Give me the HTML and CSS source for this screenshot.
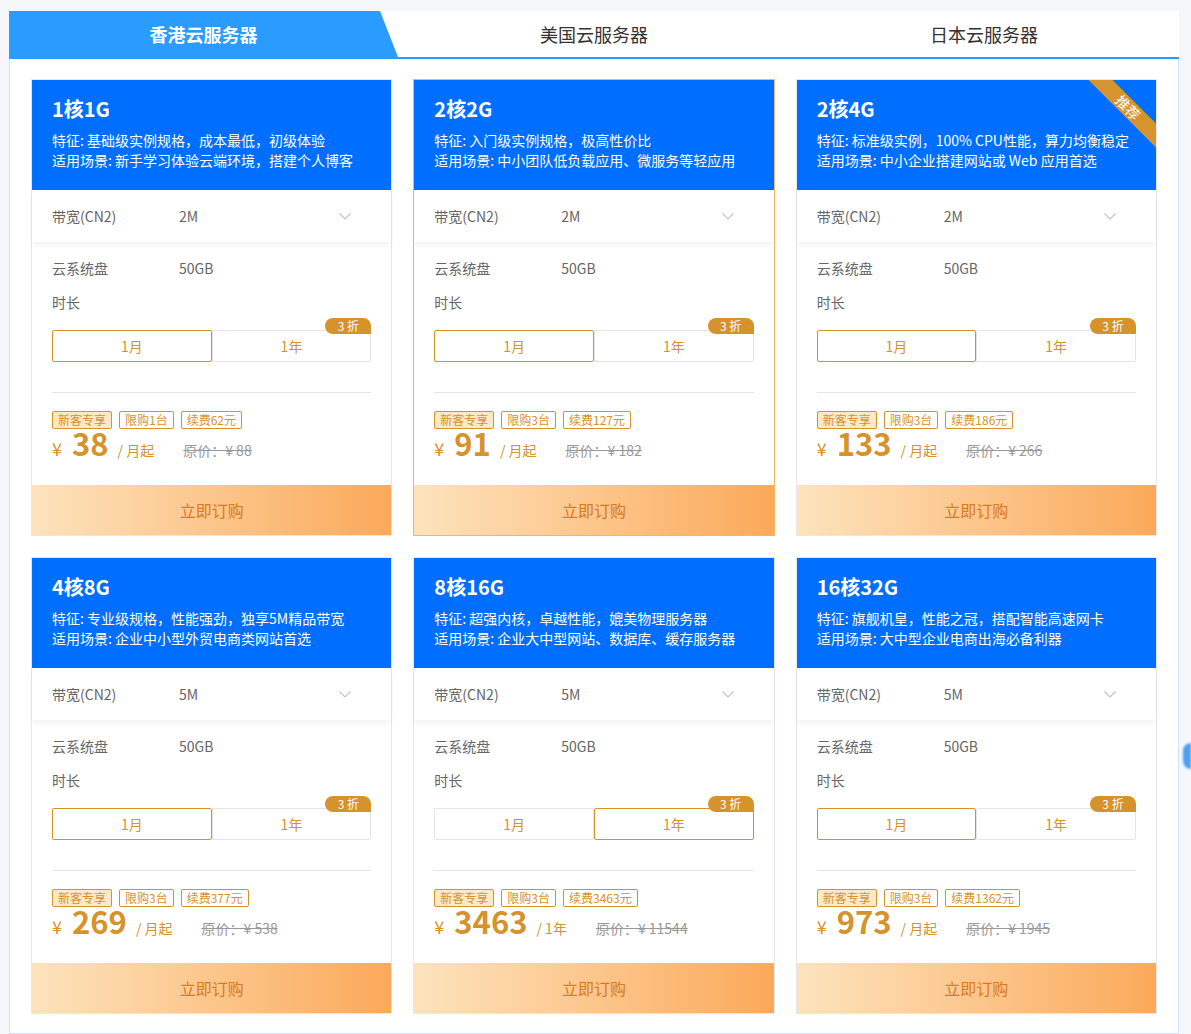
FILE: index.html
```html
<!DOCTYPE html>
<html lang="zh-CN">
<head>
    <meta charset="UTF-8">
    <meta name="viewport" content="width=device-width, initial-scale=1.0">
    <title>云服务器套餐</title>
    <link rel="stylesheet" href="styles.css">
</head>
<body>

<div class="panel">
    <!-- 地区切换 -->
    <div class="tabs">
        <div class="tab active">香港云服务器</div>
        <div class="tab">美国云服务器</div>
        <div class="tab">日本云服务器</div>
    </div>

    <div class="plans">
        <!-- 1核1G -->
        <div class="plan-card">
            <div class="plan-head">
                <h3 class="plan-name">1核1G</h3>
                <p class="plan-desc">特征: 基础级实例规格，成本最低，初级体验</p>
                <p class="plan-desc">适用场景: 新手学习体验云端环境，搭建个人博客</p>
            </div>
            <div class="plan-select">
                <span class="field-label">带宽(CN2)</span>
                <span class="field-value">2M</span>
                <svg class="chevron" width="12" height="7" viewBox="0 0 12 7"><polyline points="0.5,0.5 6,6 11.5,0.5"/></svg>
            </div>
            <div class="plan-body">
                <div class="field-row"><span class="field-label">云系统盘</span><span class="field-value">50GB</span></div>
                <div class="field-row"><span class="field-label">时长</span></div>
                <div class="duration">
                    <span class="dur-btn active">1月</span>
                    <span class="dur-btn">1年</span>
                    <span class="discount">3 折</span>
                </div>
                <div class="divider"></div>
                <div class="tags">
                    <span class="tag tag-new">新客专享</span>
                    <span class="tag">限购1台</span>
                    <span class="tag">续费62元</span>
                </div>
                <div class="price-row">
                    <span class="currency">¥</span>
                    <span class="amount">38</span>
                    <span class="unit">/ 月起</span>
                    <span class="orig">原价：¥ 88</span>
                </div>
            </div>
            <a class="buy-btn" href="#">立即订购</a>
        </div>

        <!-- 2核2G -->
        <div class="plan-card hover">
            <div class="plan-head">
                <h3 class="plan-name">2核2G</h3>
                <p class="plan-desc">特征: 入门级实例规格，极高性价比</p>
                <p class="plan-desc">适用场景: 中小团队低负载应用、微服务等轻应用</p>
            </div>
            <div class="plan-select">
                <span class="field-label">带宽(CN2)</span>
                <span class="field-value">2M</span>
                <svg class="chevron" width="12" height="7" viewBox="0 0 12 7"><polyline points="0.5,0.5 6,6 11.5,0.5"/></svg>
            </div>
            <div class="plan-body">
                <div class="field-row"><span class="field-label">云系统盘</span><span class="field-value">50GB</span></div>
                <div class="field-row"><span class="field-label">时长</span></div>
                <div class="duration">
                    <span class="dur-btn active">1月</span>
                    <span class="dur-btn">1年</span>
                    <span class="discount">3 折</span>
                </div>
                <div class="divider"></div>
                <div class="tags">
                    <span class="tag tag-new">新客专享</span>
                    <span class="tag">限购3台</span>
                    <span class="tag">续费127元</span>
                </div>
                <div class="price-row">
                    <span class="currency">¥</span>
                    <span class="amount">91</span>
                    <span class="unit">/ 月起</span>
                    <span class="orig">原价：¥ 182</span>
                </div>
            </div>
            <a class="buy-btn" href="#">立即订购</a>
        </div>

        <!-- 2核4G 推荐 -->
        <div class="plan-card">
            <div class="plan-head">
                <span class="ribbon">推荐</span>
                <h3 class="plan-name">2核4G</h3>
                <p class="plan-desc">特征: 标准级实例，100% CPU性能，算力均衡稳定</p>
                <p class="plan-desc">适用场景: 中小企业搭建网站或 Web 应用首选</p>
            </div>
            <div class="plan-select">
                <span class="field-label">带宽(CN2)</span>
                <span class="field-value">2M</span>
                <svg class="chevron" width="12" height="7" viewBox="0 0 12 7"><polyline points="0.5,0.5 6,6 11.5,0.5"/></svg>
            </div>
            <div class="plan-body">
                <div class="field-row"><span class="field-label">云系统盘</span><span class="field-value">50GB</span></div>
                <div class="field-row"><span class="field-label">时长</span></div>
                <div class="duration">
                    <span class="dur-btn active">1月</span>
                    <span class="dur-btn">1年</span>
                    <span class="discount">3 折</span>
                </div>
                <div class="divider"></div>
                <div class="tags">
                    <span class="tag tag-new">新客专享</span>
                    <span class="tag">限购3台</span>
                    <span class="tag">续费186元</span>
                </div>
                <div class="price-row">
                    <span class="currency">¥</span>
                    <span class="amount">133</span>
                    <span class="unit">/ 月起</span>
                    <span class="orig">原价：¥ 266</span>
                </div>
            </div>
            <a class="buy-btn" href="#">立即订购</a>
        </div>

        <!-- 4核8G -->
        <div class="plan-card">
            <div class="plan-head">
                <h3 class="plan-name">4核8G</h3>
                <p class="plan-desc">特征: 专业级规格，性能强劲，独享5M精品带宽</p>
                <p class="plan-desc">适用场景: 企业中小型外贸电商类网站首选</p>
            </div>
            <div class="plan-select">
                <span class="field-label">带宽(CN2)</span>
                <span class="field-value">5M</span>
                <svg class="chevron" width="12" height="7" viewBox="0 0 12 7"><polyline points="0.5,0.5 6,6 11.5,0.5"/></svg>
            </div>
            <div class="plan-body">
                <div class="field-row"><span class="field-label">云系统盘</span><span class="field-value">50GB</span></div>
                <div class="field-row"><span class="field-label">时长</span></div>
                <div class="duration">
                    <span class="dur-btn active">1月</span>
                    <span class="dur-btn">1年</span>
                    <span class="discount">3 折</span>
                </div>
                <div class="divider"></div>
                <div class="tags">
                    <span class="tag tag-new">新客专享</span>
                    <span class="tag">限购3台</span>
                    <span class="tag">续费377元</span>
                </div>
                <div class="price-row">
                    <span class="currency">¥</span>
                    <span class="amount">269</span>
                    <span class="unit">/ 月起</span>
                    <span class="orig">原价：¥ 538</span>
                </div>
            </div>
            <a class="buy-btn" href="#">立即订购</a>
        </div>

        <!-- 8核16G -->
        <div class="plan-card">
            <div class="plan-head">
                <h3 class="plan-name">8核16G</h3>
                <p class="plan-desc">特征: 超强内核，卓越性能，媲美物理服务器</p>
                <p class="plan-desc">适用场景: 企业大中型网站、数据库、缓存服务器</p>
            </div>
            <div class="plan-select">
                <span class="field-label">带宽(CN2)</span>
                <span class="field-value">5M</span>
                <svg class="chevron" width="12" height="7" viewBox="0 0 12 7"><polyline points="0.5,0.5 6,6 11.5,0.5"/></svg>
            </div>
            <div class="plan-body">
                <div class="field-row"><span class="field-label">云系统盘</span><span class="field-value">50GB</span></div>
                <div class="field-row"><span class="field-label">时长</span></div>
                <div class="duration">
                    <span class="dur-btn">1月</span>
                    <span class="dur-btn active">1年</span>
                    <span class="discount">3 折</span>
                </div>
                <div class="divider"></div>
                <div class="tags">
                    <span class="tag tag-new">新客专享</span>
                    <span class="tag">限购3台</span>
                    <span class="tag">续费3463元</span>
                </div>
                <div class="price-row">
                    <span class="currency">¥</span>
                    <span class="amount">3463</span>
                    <span class="unit">/ 1年</span>
                    <span class="orig">原价：¥ 11544</span>
                </div>
            </div>
            <a class="buy-btn" href="#">立即订购</a>
        </div>

        <!-- 16核32G -->
        <div class="plan-card">
            <div class="plan-head">
                <h3 class="plan-name">16核32G</h3>
                <p class="plan-desc">特征: 旗舰机皇，性能之冠，搭配智能高速网卡</p>
                <p class="plan-desc">适用场景: 大中型企业电商出海必备利器</p>
            </div>
            <div class="plan-select">
                <span class="field-label">带宽(CN2)</span>
                <span class="field-value">5M</span>
                <svg class="chevron" width="12" height="7" viewBox="0 0 12 7"><polyline points="0.5,0.5 6,6 11.5,0.5"/></svg>
            </div>
            <div class="plan-body">
                <div class="field-row"><span class="field-label">云系统盘</span><span class="field-value">50GB</span></div>
                <div class="field-row"><span class="field-label">时长</span></div>
                <div class="duration">
                    <span class="dur-btn active">1月</span>
                    <span class="dur-btn">1年</span>
                    <span class="discount">3 折</span>
                </div>
                <div class="divider"></div>
                <div class="tags">
                    <span class="tag tag-new">新客专享</span>
                    <span class="tag">限购3台</span>
                    <span class="tag">续费1362元</span>
                </div>
                <div class="price-row">
                    <span class="currency">¥</span>
                    <span class="amount">973</span>
                    <span class="unit">/ 月起</span>
                    <span class="orig">原价：¥ 1945</span>
                </div>
            </div>
            <a class="buy-btn" href="#">立即订购</a>
        </div>
    </div>
</div>

<!-- 右侧悬浮按钮 (只露出一半) -->
<div class="float-dot"></div>

</body>
</html>
```

FILE: styles.css
```css
/* 页面基础 */
body {
    margin: 0;
    background: #f5f7fb;
    font-family: "Microsoft YaHei", "Noto Sans CJK SC", sans-serif;
    color: #666;
}

.panel {
    width: 1170px;
    margin: 11px 0 0 9px;
    background: #fff;
}

/* 顶部标签 */
.tabs {
    display: grid;
    grid-template-columns: repeat(3, 1fr);
    border-bottom: 2px solid #2a9bff;
}

.tab {
    height: 46px;
    line-height: 46px;
    text-align: center;
    font-size: 18px;
    color: #333;
}

.tab.active {
    width: 389px;
    background: #2a9bff;
    color: #fff;
    font-weight: bold;
    clip-path: polygon(0 0, calc(100% - 18px) 0, 100% 100%, 0 100%);
}

/* 套餐列表 */
.plans {
    display: grid;
    grid-template-columns: repeat(3, 1fr);
    gap: 21px;
    padding: 20px 21px 19px;
    border: 1px solid #cfe3ff;
    border-top: none;
}

.plan-card {
    display: flex;
    flex-direction: column;
    border: 1px solid #e4e7ed;
    background: #fff;
}

.plan-card.hover {
    border-color: #f8b65c;
}

.plan-head {
    position: relative;
    overflow: hidden;
    height: 110px;
    box-sizing: border-box;
    padding: 16px 20px 0;
    background: #006eff;
    color: #fff;
}

.plan-name {
    margin: 0 0 8px;
    font-size: 20px;
    line-height: 26px;
    font-weight: bold;
}

.plan-desc {
    margin: 0;
    font-size: 14px;
    line-height: 20px;
}

/* 推荐角标 */
.ribbon {
    position: absolute;
    top: 19px;
    right: -22px;
    width: 100px;
    height: 17px;
    line-height: 17px;
    text-align: center;
    font-size: 14px;
    color: #fff;
    background: #d6952c;
    transform: rotate(45deg);
}

/* 带宽下拉 */
.plan-select {
    display: flex;
    align-items: center;
    height: 52px;
    padding: 0 40px 0 20px;
    font-size: 14px;
    box-shadow: 0 3px 6px rgba(0, 0, 0, 0.05);
    position: relative;
}

.field-label {
    width: 127px;
    flex-shrink: 0;
}

.field-value {
    flex: 1;
}

.chevron polyline {
    fill: none;
    stroke: #c0c4cc;
    stroke-width: 1.2;
}

.plan-body {
    flex: 1;
    padding: 16px 20px 21px;
}

.field-row {
    display: flex;
    font-size: 14px;
    line-height: 20px;
    margin-bottom: 14px;
}

/* 时长选择 */
.duration {
    position: relative;
    display: flex;
    margin-top: 18px;
}

.dur-btn {
    flex: 1;
    height: 30px;
    line-height: 30px;
    text-align: center;
    font-size: 14px;
    color: #d6922b;
    border: 1px solid #e4e4e4;
    border-radius: 2px;
}

.dur-btn.active {
    border-color: #d6922b;
}

.discount {
    position: absolute;
    right: 0;
    top: -12px;
    width: 46px;
    height: 16px;
    line-height: 16px;
    text-align: center;
    font-size: 12px;
    color: #fff;
    background: #d6922b;
    border-radius: 8px 8px 0 8px;
}

.divider {
    height: 1px;
    background: #e5e5e5;
    margin: 30px 0 18px;
}

/* 标签 */
.tags {
    display: flex;
    gap: 7px;
}

.tag {
    height: 16px;
    line-height: 16px;
    padding: 0 5px;
    font-size: 12px;
    color: #d6922b;
    border: 1px solid #d6922b;
    border-radius: 2px;
}

.tag-new {
    background: #fde8c8;
}

/* 价格 */
.price-row {
    display: flex;
    align-items: baseline;
    color: #d6922b;
    line-height: 28px;
}

.currency {
    font-size: 18px;
    margin-right: 10px;
}

.amount {
    font-size: 31px;
    font-weight: bold;
    margin-right: 9px;
}

.unit {
    font-size: 14px;
}

.orig {
    font-size: 14px;
    color: #999;
    text-decoration: line-through;
    margin-left: 29px;
}

/* 购买按钮 */
.buy-btn {
    display: block;
    height: 50px;
    line-height: 50px;
    text-align: center;
    font-size: 16px;
    color: #db7a18;
    text-decoration: none;
    background: linear-gradient(90deg, #fde3bd 0%, #fba95a 100%);
}

/* 右侧悬浮 */
.float-dot {
    position: fixed;
    right: 0;
    top: 743px;
    width: 8px;
    height: 26px;
    border-radius: 13px 0 0 13px;
    background: #4d9ff0;
    filter: blur(1px);
}
```
